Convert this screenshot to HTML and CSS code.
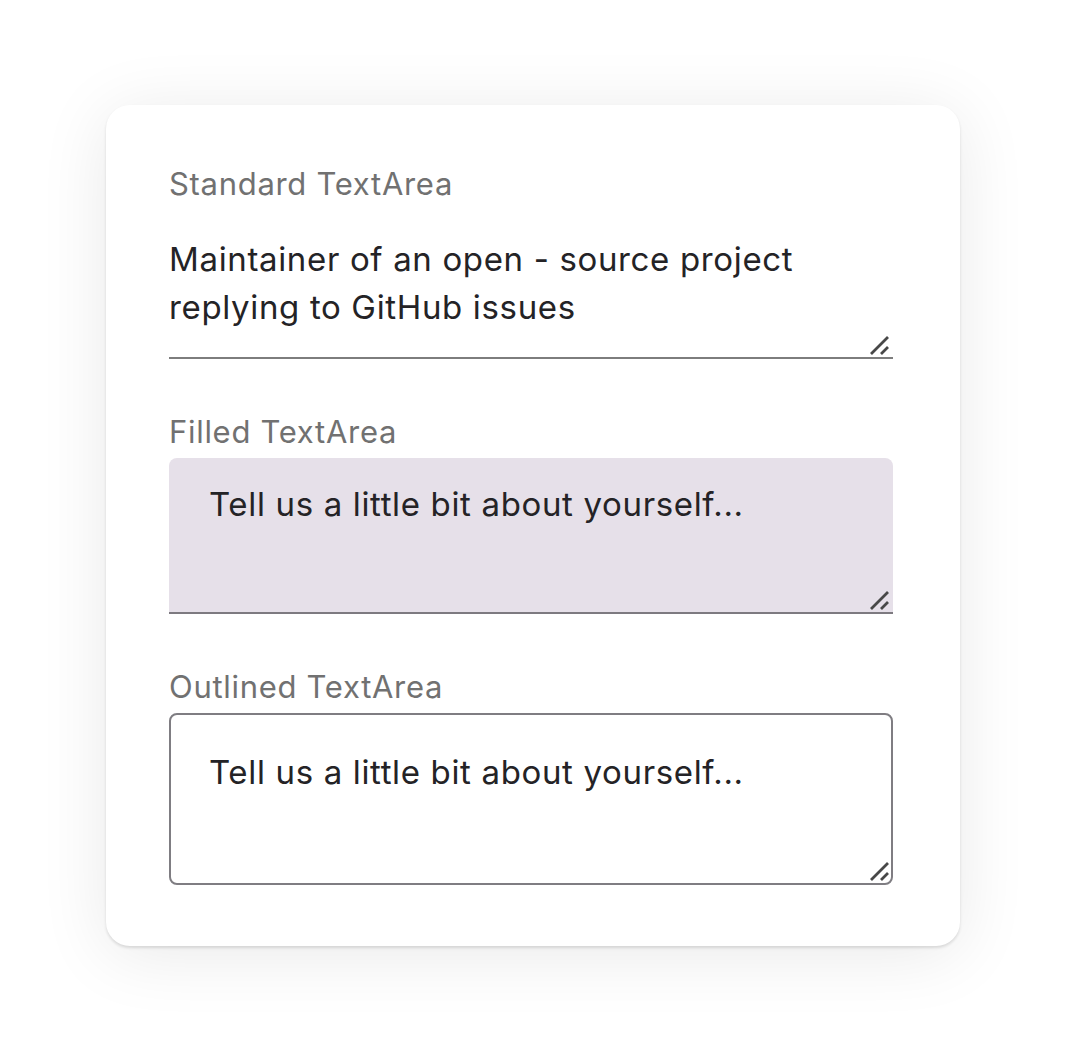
FILE: index.html
```html
<!DOCTYPE html>
<html>
<head>
    <title>TextArea variants</title>
    <link rel="stylesheet" href="styles.css">
</head>
<body>
    <div class="page">
        <div class="card">
            <div class="field">
                <label class="field-label" for="standardArea">Standard TextArea</label>
                <div class="area-wrap">
                    <textarea id="standardArea" class="area area-standard">Maintainer of an open - source project replying to GitHub issues</textarea>
                    <svg class="resize-grip" viewBox="0 0 24 24" width="24" height="24"><path d="M2 19 L19 2 M12 19 L19 12"/></svg>
                </div>
            </div>
            <div class="field">
                <label class="field-label" for="filledArea">Filled TextArea</label>
                <div class="area-wrap">
                    <textarea id="filledArea" class="area area-filled" placeholder="Tell us a little bit about yourself..."></textarea>
                    <svg class="resize-grip" viewBox="0 0 24 24" width="24" height="24"><path d="M2 19 L19 2 M12 19 L19 12"/></svg>
                </div>
            </div>
            <div class="field">
                <label class="field-label" for="outlinedArea">Outlined TextArea</label>
                <div class="area-wrap">
                    <textarea id="outlinedArea" class="area area-outlined" placeholder="Tell us a little bit about yourself..."></textarea>
                    <svg class="resize-grip" viewBox="0 0 24 24" width="24" height="24"><path d="M2 19 L19 2 M12 19 L19 12"/></svg>
                </div>
            </div>
        </div>
    </div>
</body>
</html>
```

FILE: styles.css
```css
body {
    font-family: Inter, "Noto Sans", sans-serif;
    margin: 0;
    padding: 0;
    background-color: #ffffff;
}

.page {
    display: flex;
    justify-content: center;
    padding: 105px 0 109px 0;
}

.card {
    width: 854px;
    box-sizing: border-box;
    padding: 61px 67px 61px 63px;
    background-color: #ffffff;
    border-radius: 24px;
    box-shadow: 0 8px 70px rgba(0, 0, 0, 0.09), 0 2px 3px rgba(0, 0, 0, 0.12);
    display: flex;
    flex-direction: column;
    gap: 55px;
}

.field {
    display: flex;
    flex-direction: column;
    gap: 8px;
}

.field-label {
    font-size: 31px;
    line-height: 36px;
    letter-spacing: 0.7px;
    color: #717171;
}

.area-wrap {
    position: relative;
}

.area {
    display: block;
    width: 100%;
    box-sizing: border-box;
    margin: 0;
    font: inherit;
    font-size: 33px;
    line-height: 48px;
    letter-spacing: 0.65px;
    color: #242326;
    border: none;
    outline: none;
    resize: none;
    overflow: hidden;
    background: transparent;
}

.area::placeholder {
    color: #242326;
    opacity: 1;
}

.area-standard {
    height: 149px;
    padding: 25px 0 0 0;
    border-bottom: 2px solid #7d7d7d;
}

.area-filled {
    height: 156px;
    padding: 22px 40px 0 40px;
    background-color: #e6e0e9;
    border-radius: 8px 8px 0 0;
    border-bottom: 2px solid #7d7a80;
}

.area-outlined {
    height: 172px;
    padding: 33px 38px 0 38px;
    border: 2px solid #7f7d82;
    border-radius: 8px;
}

.resize-grip {
    position: absolute;
    right: 0;
    bottom: 0;
    fill: none;
    stroke: #484848;
    stroke-width: 2.8;
    pointer-events: none;
}
```
